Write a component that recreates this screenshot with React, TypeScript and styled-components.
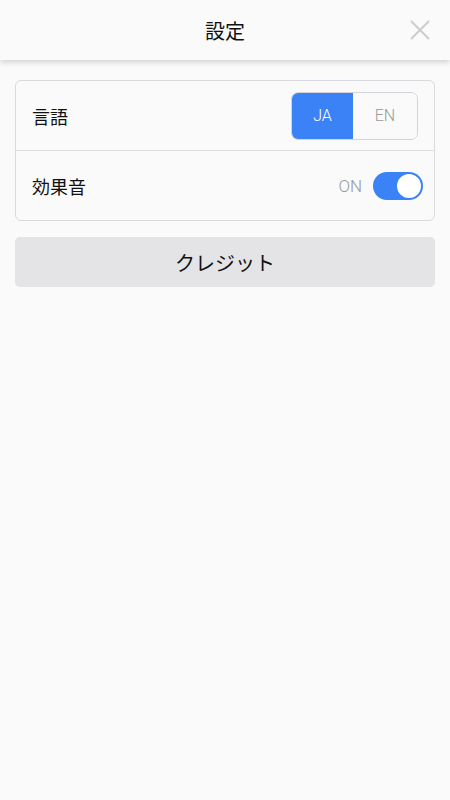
import React, { useState } from "react";
import styled, { createGlobalStyle } from "styled-components";

const Global = createGlobalStyle`
  html, body { margin: 0; padding: 0; background: #fafafa; }
  body { font-family: "Noto Sans CJK JP", "Noto Sans", sans-serif; color: #111; }
`;

const Page = styled.div`
  min-height: 800px;
  background: #fafafa;
`;

const Header = styled.header`
  height: 60px;
  display: flex;
  align-items: center;
  justify-content: center;
  position: relative;
  background: #fafafa;
  box-shadow: 0 2px 6px rgba(0, 0, 0, 0.18);
`;

const Title = styled.h1`
  margin: 0;
  font-size: 20px;
  font-weight: 400;
  color: #111;
`;

const CloseButton = styled.button`
  position: absolute;
  right: 20px;
  top: 20px;
  width: 20px;
  height: 20px;
  padding: 0;
  border: none;
  background: none;
  display: flex;
  align-items: center;
  justify-content: center;
`;

const Content = styled.main`
  padding: 20px 15px;
  display: flex;
  flex-direction: column;
  gap: 16px;
`;

const Card = styled.section`
  border: 1px solid #d9d9de;
  border-radius: 6px;
  background: #fafafa;
  overflow: hidden;
`;

const Row = styled.div<{ $divider?: boolean }>`
  height: 69px;
  display: flex;
  align-items: center;
  justify-content: space-between;
  padding: 0 11px 0 16px;
  border-bottom: ${(p) => (p.$divider ? "1px solid #dcdce0" : "none")};
`;

const Label = styled.span`
  font-size: 18px;
  color: #111;
`;

const Segmented = styled.div`
  display: flex;
  width: 125px;
  height: 46px;
  border: 1px solid #d4d4d8;
  border-radius: 7px;
  overflow: hidden;
  margin-right: 5px;
`;

const Segment = styled.button<{ $active?: boolean }>`
  flex: ${(p) => (p.$active ? "0 0 61px" : "1")};
  border: none;
  padding: 0;
  font-family: "Roboto", "Noto Sans", sans-serif;
  font-weight: 300;
  font-size: 16px;
  background: ${(p) => (p.$active ? "#3b82f6" : "#fafafa")};
  color: ${(p) => (p.$active ? "#fff" : "#999")};
`;

const ToggleWrap = styled.div`
  display: flex;
  align-items: center;
  gap: 11px;
`;

const ToggleText = styled.span`
  font-family: "Roboto", "Noto Sans", sans-serif;
  font-weight: 300;
  font-size: 17px;
  color: #999;
`;

const Track = styled.button<{ $on: boolean }>`
  width: 50px;
  height: 28px;
  border-radius: 14px;
  border: none;
  padding: 2px;
  background: ${(p) => (p.$on ? "#3b82f6" : "#ccc")};
  display: flex;
  justify-content: ${(p) => (p.$on ? "flex-end" : "flex-start")};
  align-items: center;
`;

const Knob = styled.span`
  width: 24px;
  height: 24px;
  border-radius: 50%;
  background: #fff;
`;

const CreditButton = styled.button`
  height: 50px;
  border: none;
  border-radius: 5px;
  background: #e4e4e7;
  font-family: "Noto Sans CJK JP", sans-serif;
  font-size: 20px;
  color: #111;
`;

export default function App() {
  const [lang, setLang] = useState<"JA" | "EN">("JA");
  const [sound, setSound] = useState(true);
  return (
    <Page>
      <Global />
      <Header>
        <Title>設定</Title>
        <CloseButton aria-label="close">
          <svg width="20" height="20" viewBox="0 0 20 20">
            <path d="M1 1 L19 19 M19 1 L1 19" stroke="#cccccc" strokeWidth="2" />
          </svg>
        </CloseButton>
      </Header>
      <Content>
        <Card>
          <Row $divider>
            <Label>言語</Label>
            <Segmented>
              <Segment $active={lang === "JA"} onClick={() => setLang("JA")}>JA</Segment>
              <Segment $active={lang === "EN"} onClick={() => setLang("EN")}>EN</Segment>
            </Segmented>
          </Row>
          <Row>
            <Label>効果音</Label>
            <ToggleWrap>
              <ToggleText>{sound ? "ON" : "OFF"}</ToggleText>
              <Track $on={sound} onClick={() => setSound(!sound)}>
                <Knob />
              </Track>
            </ToggleWrap>
          </Row>
        </Card>
        <CreditButton>クレジット</CreditButton>
      </Content>
    </Page>
  );
}
